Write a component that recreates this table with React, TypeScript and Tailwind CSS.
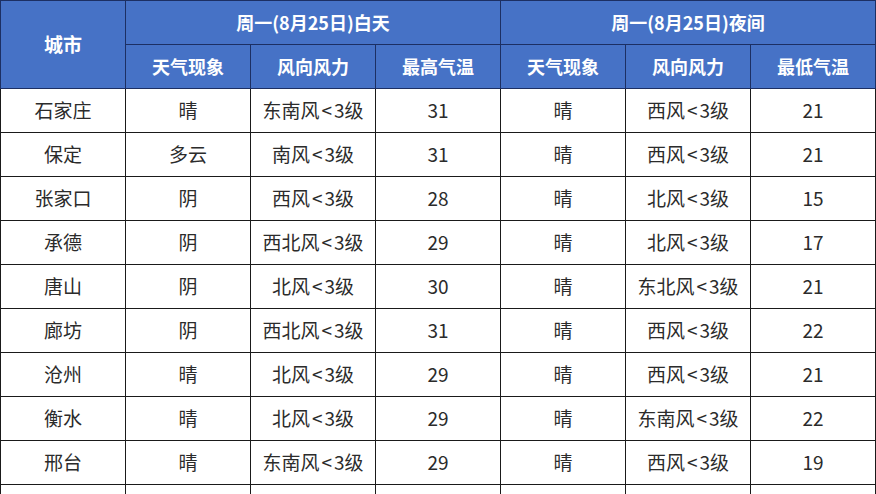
const rows = [
  ["石家庄", "晴", "东南风<3级", "31", "晴", "西风<3级", "21"],
  ["保定", "多云", "南风<3级", "31", "晴", "西风<3级", "21"],
  ["张家口", "阴", "西风<3级", "28", "晴", "北风<3级", "15"],
  ["承德", "阴", "西北风<3级", "29", "晴", "北风<3级", "17"],
  ["唐山", "阴", "北风<3级", "30", "晴", "东北风<3级", "21"],
  ["廊坊", "阴", "西北风<3级", "31", "晴", "西风<3级", "22"],
  ["沧州", "晴", "北风<3级", "29", "晴", "西风<3级", "21"],
  ["衡水", "晴", "北风<3级", "29", "晴", "东南风<3级", "22"],
  ["邢台", "晴", "东南风<3级", "29", "晴", "西风<3级", "19"],
  ["", "", "", "", "", "", ""],
];

const head = "border border-[#1c2f63] bg-[#4672c6] text-white font-bold text-center";

// wind cells: the "<" sits a little apart from its neighbours
function Cell({ text }: { text: string }) {
  const k = text.indexOf("<");
  if (k < 0) return <>{text}</>;
  return (
    <>
      {text.slice(0, k)}
      <span className="px-[2px]">&lt;</span>
      {text.slice(k + 1)}
    </>
  );
}

export default function App() {
  return (
    <div className="w-[876px] h-[494px] overflow-hidden bg-white font-['Noto_Sans_CJK_SC','Noto_Sans',sans-serif]">
      <table className="table-fixed border-collapse w-[875px]">
        <colgroup>
          <col className="w-[125px]" />
          <col className="w-[125px]" />
          <col className="w-[125px]" />
          <col className="w-[125px]" />
          <col className="w-[125px]" />
          <col className="w-[125px]" />
          <col className="w-[125px]" />
        </colgroup>
        <thead>
          <tr className="h-[44px]">
            <th rowSpan={2} className={`${head} text-[19px]`}>城市</th>
            <th colSpan={3} className={`${head} text-[18px]`}>周一(8月25日)白天</th>
            <th colSpan={3} className={`${head} text-[18px]`}>周一(8月25日)夜间</th>
          </tr>
          <tr className="h-[44px]">
            <th className={`${head} text-[18px]`}>天气现象</th>
            <th className={`${head} text-[18px]`}>风向风力</th>
            <th className={`${head} text-[18px]`}>最高气温</th>
            <th className={`${head} text-[18px]`}>天气现象</th>
            <th className={`${head} text-[18px]`}>风向风力</th>
            <th className={`${head} text-[18px]`}>最低气温</th>
          </tr>
        </thead>
        <tbody>
          {rows.map((r, i) => (
            <tr key={i} className="h-[44px]">
              {r.map((c, j) => (
                <td
                  key={j}
                  className="border border-[#1a1a1a] text-center text-[19px] text-[#2b2b2b] p-0"
                >
                  <Cell text={c} />
                </td>
              ))}
            </tr>
          ))}
        </tbody>
      </table>
    </div>
  );
}
